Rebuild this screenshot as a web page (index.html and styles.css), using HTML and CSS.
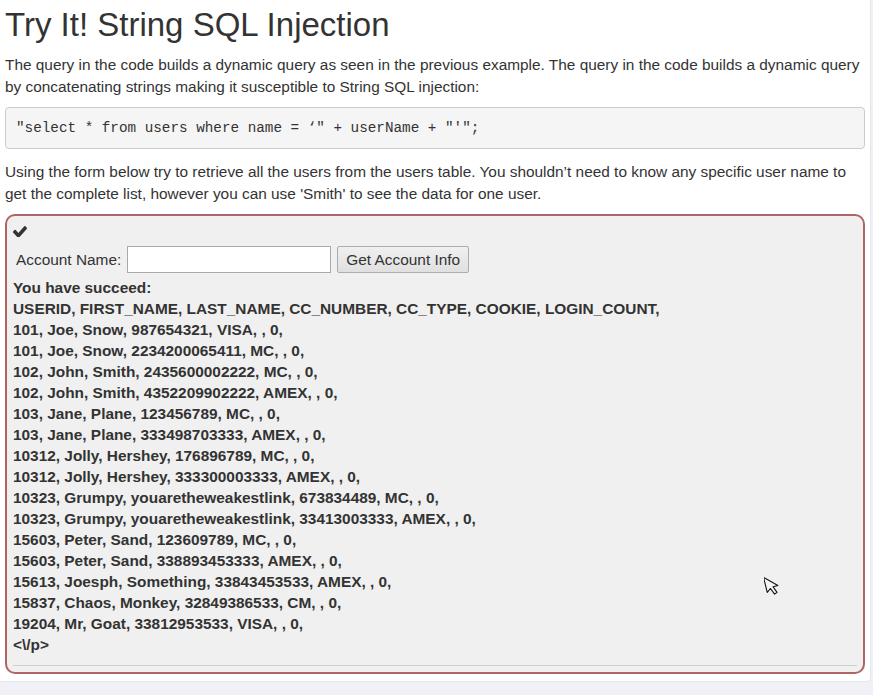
FILE: index.html
```html
<!DOCTYPE html>
<html>
<head>
<meta charset="utf-8">
<link rel="stylesheet" href="styles.css">
</head>
<body>
<div class="panel">
  <h1 class="title">Try It! String SQL Injection</h1>
  <p class="text">The query in the code builds a dynamic query as seen in the previous example. The query in the code builds a dynamic query by concatenating strings making it susceptible to String SQL injection:</p>
  <pre class="code">"select * from users where name = ‘" + userName + "'";</pre>
  <p class="text text2">Using the form below try to retrieve all the users from the users table. You shouldn’t need to know any specific user name to get the complete list, however you can use 'Smith' to see the data for one user.</p>
  <div class="attack">
    <svg class="check" viewBox="121 330 1550 1100" width="14" height="11" preserveAspectRatio="none"><path fill="#333" d="M1671 566q0 40-28 68l-724 724-136 136q-28 28-68 28t-68-28l-136-136-362-362q-28-28-28-68t28-68l136-136q28-28 68-28t68 28l294 295 656-657q28-28 68-28t68 28l136 136q28 28 28 68z"/></svg>
    <form class="form">
      <label class="label">Account Name:</label>
      <input class="input" type="text">
      <button class="btn" type="button">Get Account Info</button>
    </form>
    <div class="output">
      <div>You have succeed:</div>
      <div>USERID, FIRST_NAME, LAST_NAME, CC_NUMBER, CC_TYPE, COOKIE, LOGIN_COUNT, </div>
      <div>101, Joe, Snow, 987654321, VISA, , 0, </div>
      <div>101, Joe, Snow, 2234200065411, MC, , 0, </div>
      <div>102, John, Smith, 2435600002222, MC, , 0, </div>
      <div>102, John, Smith, 4352209902222, AMEX, , 0, </div>
      <div>103, Jane, Plane, 123456789, MC, , 0, </div>
      <div>103, Jane, Plane, 333498703333, AMEX, , 0, </div>
      <div>10312, Jolly, Hershey, 176896789, MC, , 0, </div>
      <div>10312, Jolly, Hershey, 333300003333, AMEX, , 0, </div>
      <div>10323, Grumpy, youaretheweakestlink, 673834489, MC, , 0, </div>
      <div>10323, Grumpy, youaretheweakestlink, 33413003333, AMEX, , 0, </div>
      <div>15603, Peter, Sand, 123609789, MC, , 0, </div>
      <div>15603, Peter, Sand, 338893453333, AMEX, , 0, </div>
      <div>15613, Joesph, Something, 33843453533, AMEX, , 0, </div>
      <div>15837, Chaos, Monkey, 32849386533, CM, , 0, </div>
      <div>19204, Mr, Goat, 33812953533, VISA, , 0, </div>
      <div>&lt;\/p&gt;</div>
    </div>
    <hr class="rule">
    <svg class="cursor" width="18" height="24" viewBox="0 0 18 24"><path d="M1.5 1.5 L1.5 17 L5.5 14 L8.2 20.5 L11 19.3 L8.5 13 L13.5 12.8 Z" fill="#f4f4f4" stroke="#111" stroke-width="1.1" stroke-linejoin="round" transform="rotate(-14 4 10)"/></svg>
  </div>
</div>
</body>
</html>
```

FILE: styles.css
```css
html, body {
  margin: 0;
  padding: 0;
}
body {
  background: #eff1f6;
  font-family: "Liberation Sans", Arial, sans-serif;
  color: #333;
  width: 873px;
  height: 695px;
  overflow: hidden;
}
.panel {
  width: 860px;
  background: #fff;
  padding: 0 5px 7px 5px;
  border-bottom-right-radius: 4px;
  box-shadow: 1px 1px 1px rgba(0,0,0,0.04);
}
.title {
  margin: 0;
  padding-top: 7px;
  font-size: 33px;
  line-height: 36px;
  font-weight: 400;
  margin-bottom: 11px;
}
.text {
  margin: 0;
  font-size: 15.4px;
  line-height: 22px;
}
.code {
  margin: 9px 0 12px;
  padding: 10px 10px;
  background: #f5f5f5;
  border: 1px solid #ccc;
  border-radius: 4px;
  font-family: "Liberation Mono", "Courier New", monospace;
  font-size: 14.3px;
  line-height: 20px;
  color: #333;
}
.text2 {
  margin-bottom: 9px;
}
.attack {
  position: relative;
  border: 2px solid #b06565;
  border-radius: 10px;
  background: #f0f0f0;
  padding: 10px 6px 6px 6px;
}
.check {
  display: block;
}
.form {
  display: flex;
  align-items: center;
  margin-top: 9px;
  padding-left: 3px;
}
.label {
  font-size: 15.4px;
  margin-right: 6px;
}
.input {
  box-sizing: border-box;
  width: 204px;
  height: 27px;
  margin: 0;
  border: 1px solid #a9a9a9;
  background: #fff;
  padding: 2px 4px;
}
.btn {
  box-sizing: border-box;
  height: 27px;
  width: 132px;
  margin: 0 0 0 6px;
  padding: 0;
  font-family: "Liberation Sans", Arial, sans-serif;
  font-size: 15.4px;
  color: #333;
  border: 1px solid #adadad;
  border-radius: 2px;
  background: linear-gradient(#f0f0f0, #e0e0e0);
}
.output {
  margin-top: 4px;
  font-size: 15.4px;
  font-weight: 700;
  line-height: 21px;
}
.rule {
  margin: 10px 0 0 0;
  border: 0;
  border-top: 1px solid #cfcfcf;
  height: 0;
}
.cursor {
  position: absolute;
  left: 757px;
  top: 359px;
}
```
